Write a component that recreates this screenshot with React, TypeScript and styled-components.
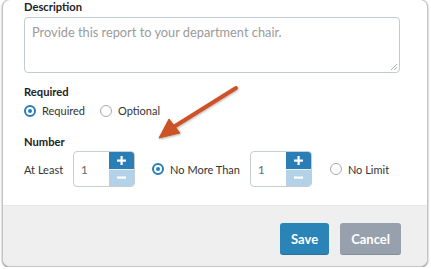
import React from "react";
import styled, { createGlobalStyle } from "styled-components";

const Global = createGlobalStyle`
  html, body { margin: 0; padding: 0; background: #ffffff; }
  body { font-family: Lato, "Open Sans", sans-serif; color: #333; }
`;

const Card = styled.div`
  position: relative;
  box-sizing: border-box;
  width: 426px;
  height: 268px;
  margin: -1px 0 0 2px;
  border: 1px solid #c4c4c4;
  border-radius: 8px;
  box-shadow: 0 1px 2px rgba(0, 0, 0, 0.45);
  background: #fff;
  overflow: hidden;
  display: flex;
  flex-direction: column;
`;

const Body = styled.div`
  padding: 0 26px 0 21px;
  display: flex;
  flex-direction: column;
  flex: 1;
`;

const Label = styled.div<{ $mt: number }>`
  font-size: 11.2px;
  font-weight: 700;
  line-height: 13px;
  color: #222;
  margin-top: ${(p) => p.$mt}px;
`;

const TextArea = styled.div`
  position: relative;
  box-sizing: border-box;
  margin-top: 4px;
  height: 56px;
  width: 376px;
  border: 1px solid #c3cad6;
  border-radius: 4px;
  padding: 7px 7px;
  font-size: 12.8px;
  line-height: 15px;
  color: #9a9a9a;
`;

const Grip = styled.svg`
  position: absolute;
  right: 1px;
  bottom: 1px;
`;

const Row = styled.div<{ $mt: number }>`
  display: flex;
  align-items: center;
  margin-top: ${(p) => p.$mt}px;
`;

const Option = styled.div<{ $ml?: number }>`
  display: flex;
  align-items: center;
  gap: 6px;
  margin-left: ${(p) => p.$ml ?? 0}px;
  font-size: 11px;
  color: #333;
`;

const Radio = styled.span<{ $on?: boolean }>`
  box-sizing: border-box;
  width: 12px;
  height: 12px;
  border-radius: 50%;
  border: ${(p) => (p.$on ? "2px solid #2a7db5" : "1.5px solid #a9a9a9")};
  display: flex;
  align-items: center;
  justify-content: center;
  &::after {
    content: "";
    display: ${(p) => (p.$on ? "block" : "none")};
    width: 4px;
    height: 4px;
    border-radius: 50%;
    background: #2a7db5;
  }
`;

const Text = styled.span`
  font-size: 11px;
  color: #333;
`;

const Spinner = styled.div<{ $ml: number }>`
  box-sizing: border-box;
  margin-left: ${(p) => p.$ml}px;
  width: 62px;
  height: 36px;
  border: 1px solid #c6ccd6;
  border-radius: 4px;
  display: flex;
  overflow: hidden;
`;

const SpinValue = styled.div`
  flex: 1;
  padding-left: 7px;
  font-size: 11.5px;
  color: #666;
  display: flex;
  align-items: center;
`;

const SpinButtons = styled.div`
  width: 25px;
  display: flex;
  flex-direction: column;
`;

const SpinBtn = styled.div<{ $light?: boolean }>`
  flex: 1;
  background: ${(p) => (p.$light ? "#b4d2e7" : "#2a7db5")};
  color: #fff;
  display: flex;
  align-items: center;
  justify-content: center;
  & + & {
    border-top: 1px solid #e6f0f7;
  }
`;

const Footer = styled.div`
  height: 61px;
  background: #efefef;
  border-top: 1px solid #e8e8e8;
  box-sizing: border-box;
  display: flex;
  justify-content: flex-end;
  align-items: flex-start;
  gap: 11px;
  padding: 17px 26px 0 0;
`;

const Button = styled.button<{ $variant: "primary" | "muted" }>`
  box-sizing: border-box;
  height: 32px;
  padding: 0 11px;
  border: none;
  border-radius: 3px;
  background: ${(p) => (p.$variant === "primary" ? "#2b84b8" : "#97a0ad")};
  box-shadow: inset 0 -1px 0 rgba(0, 0, 0, 0.12);
  color: #fff;
  font-family: Lato, sans-serif;
  font-weight: 700;
  font-size: 13px;
`;

const Arrow = styled.svg`
  position: absolute;
  left: 0;
  top: 0;
  pointer-events: none;
`;

const Plus = () => (
  <svg width="9" height="9" viewBox="0 0 9 9">
    <rect x="3.5" y="0" width="2.2" height="9" fill="#fff" />
    <rect x="0" y="3.5" width="9" height="2.2" fill="#fff" />
  </svg>
);
const Minus = () => (
  <svg width="9" height="9" viewBox="0 0 9 9">
    <rect x="0" y="3.5" width="9" height="2.2" fill="#fff" />
  </svg>
);

const NumberBox = ({ ml }: { ml: number }) => (
  <Spinner $ml={ml}>
    <SpinValue>1</SpinValue>
    <SpinButtons>
      <SpinBtn>
        <Plus />
      </SpinBtn>
      <SpinBtn $light>
        <Minus />
      </SpinBtn>
    </SpinButtons>
  </Spinner>
);

export default function App() {
  return (
    <>
      <Global />
      <Card>
        <Body>
          <Label $mt={0}>Description</Label>
          <TextArea>
            Provide this report to your department chair.
            <Grip width="8" height="8" viewBox="0 0 8 8">
              <line x1="7" y1="1" x2="1" y2="7" stroke="#999" strokeWidth="0.8" />
              <line x1="7" y1="4" x2="4" y2="7" stroke="#999" strokeWidth="0.8" />
            </Grip>
          </TextArea>
          <Label $mt={12}>Required</Label>
          <Row $mt={6}>
            <Option>
              <Radio $on />
              Required
            </Option>
            <Option $ml={15}>
              <Radio />
              Optional
            </Option>
          </Row>
          <Label $mt={18}>Number</Label>
          <Row $mt={3}>
            <Text>At Least</Text>
            <NumberBox ml={10} />
            <Option $ml={17}>
              <Radio $on />
              No More Than
            </Option>
            <NumberBox ml={10} />
            <Option $ml={18}>
              <Radio />
              No Limit
            </Option>
          </Row>
        </Body>
        <Footer>
          <Button $variant="primary">Save</Button>
          <Button $variant="muted">Cancel</Button>
        </Footer>
      </Card>
      <Arrow width="431" height="269" viewBox="0 0 431 269">
        <defs>
          <filter id="sh" x="-20%" y="-20%" width="140%" height="140%">
            <feDropShadow dx="0.5" dy="1" stdDeviation="1" floodColor="#000" floodOpacity="0.3" />
          </filter>
        </defs>
        <g filter="url(#sh)" fill="#cc5228" stroke="#cc5228">
          <line x1="236" y1="88" x2="172" y2="128" strokeWidth="4" strokeLinecap="round" />
          <polygon points="159,138 169,119 180,133" strokeWidth="1" strokeLinejoin="round" />
        </g>
      </Arrow>
    </>
  );
}
